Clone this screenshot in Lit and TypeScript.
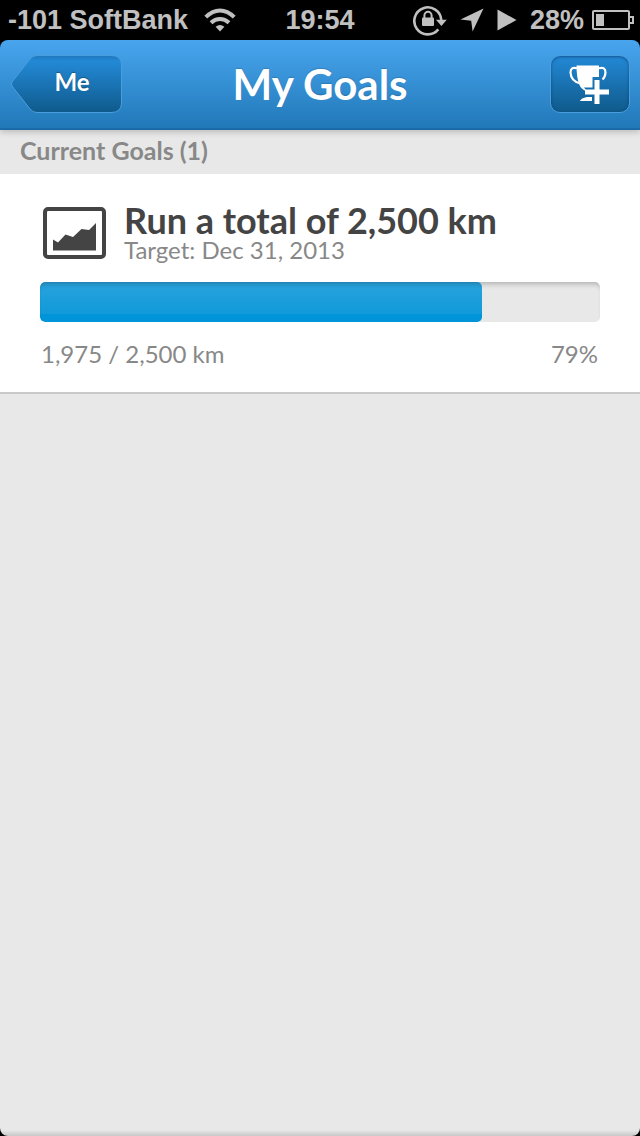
import { LitElement, html, css } from "lit";
import { customElement, property, state } from "lit/decorators.js";

interface Goal {
  title: string;
  target: string;
  done: number;
  total: number;
  unit: string;
}

@customElement("status-bar")
export class StatusBar extends LitElement {
  static styles = css`
    :host {
      display: grid;
      grid-template-columns: 1fr auto 1fr;
      align-items: center;
      height: 40px;
      padding: 0 6px;
      background: #000;
      color: #c0c0c0;
      font: 700 27px/40px "Liberation Sans", Arial, sans-serif;
      white-space: nowrap;
    }
    .side {
      display: flex;
      align-items: center;
      gap: 16px;
      padding-left: 2px;
    }
    .right {
      justify-content: flex-end;
      gap: 13px;
    }
    .power {
      display: flex;
      align-items: center;
      gap: 8px;
    }
    svg {
      display: block;
    }
  `;

  render() {
    return html`
      <div class="side">
        <span>-101 SoftBank</span>
        <svg width="32" height="24" viewBox="0 0 32 24" fill="none" stroke="#c0c0c0" stroke-width="4">
          <path d="M1.8 9.2 Q8.5 2.6 16 2.6 T30.2 9.2" />
          <path d="M7 14.8 Q11 11 16 11 T25 14.8" />
          <path d="M16 23.5 L11.6 18.8 Q16 15 20.4 18.8 Z" fill="#c0c0c0" stroke="none" />
        </svg>
      </div>
      <span>19:54</span>
      <div class="side right">
        <svg width="34" height="32" viewBox="0 0 34 32" fill="#c0c0c0">
          <path d="M25.3 25.4 A13.500 13.500 0 1 1 28.3 16" fill="none" stroke="#c0c0c0" stroke-width="2.6" />
          <path d="M23 15.8 H33.8 L28.4 22 Z" />
          <rect x="9" y="13.500" width="12" height="8.500" rx="1" />
          <path d="M11.4 14.5 V11.4 a3.6 3.6 0 0 1 7.2 0 V14.5" fill="none" stroke="#c0c0c0" stroke-width="2" />
        </svg>
        <svg width="24" height="24" viewBox="0 0 24 24" fill="#c0c0c0">
          <path d="M23.5 0.5 L12.6 23.5 L11.2 12.8 L0.5 11.6 Z" />
        </svg>
        <svg width="20" height="22" viewBox="0 0 20 22" fill="#c0c0c0">
          <path d="M0.5 0.5 L19.5 11 L0.5 21.5 Z" />
        </svg>
        <div class="power">
          <span>28%</span>
          <svg width="42" height="20" viewBox="0 0 42 20" fill="#c0c0c0">
            <rect x="1" y="1" width="36" height="18" rx="1" fill="none" stroke="#c0c0c0" stroke-width="2" />
            <rect x="4" y="4" width="8" height="12" />
            <path d="M38 7 H41 V13 H38" fill="none" stroke="#c0c0c0" stroke-width="2" />
          </svg>
        </div>
      </div>
    `;
  }
}

@customElement("nav-header")
export class NavHeader extends LitElement {
  static styles = css`
    :host {
      display: grid;
      grid-template-columns: 1fr auto 1fr;
      align-items: center;
      box-sizing: border-box;
      height: 90px;
      padding: 0 10px;
      border-radius: 8px 8px 0 0;
      background: linear-gradient(#48a5ee, #2179b8);
      border-bottom: 2px solid #1a69a8;
      box-shadow: 0 2px 6px rgba(0, 0, 0, 0.2);
      color: #fff;
      position: relative;
    }
    h1 {
      margin: 0;
      font: 700 42px/56px Lato, sans-serif;
      text-shadow: 0 -1px 1px rgba(0, 0, 0, 0.15);
    }
    button {
      display: grid;
      place-items: center;
      height: 58px;
      margin: 0;
      padding: 0;
      border: 0;
      background: none;
      color: #fff;
      font: 700 24px/32px Lato, sans-serif;
      text-shadow: 0 -1px 1px rgba(0, 0, 0, 0.3);
      cursor: pointer;
    }
    button > * {
      grid-area: 1 / 1;
    }
    .back {
      justify-self: start;
      width: 112px;
    }
    .back span {
      padding: 0 0 4px 12px;
    }
    .add {
      justify-self: end;
      box-sizing: border-box;
      width: 80px;
      border: 1px solid #4a9edb;
      border-radius: 10px;
      background: linear-gradient(#2389d6, #0f5a8b);
      box-shadow: inset 0 1px 3px rgba(0, 30, 80, 0.5);
    }
    svg {
      display: block;
    }
  `;

  @property() heading = "";
  @property() backLabel = "";

  render() {
    return html`
      <button class="back">
        <svg width="112" height="58" viewBox="0 0 112 58" aria-hidden="true">
          <defs>
            <linearGradient id="fill" x2="0" y2="1">
              <stop stop-color="#1d78bd" />
              <stop offset="0.1" stop-color="#2389d6" />
              <stop offset="1" stop-color="#0f5a8b" />
            </linearGradient>
          </defs>
          <path
            d="M27 0.500 H101 Q111.500 0.500 111.500 10 V48 Q111.500 57.500 101 57.500 H27 Q23 57.500 20 54 L2 31 Q1 29 2 27 L20 4 Q23 0.500 27 0.500 Z"
            fill="url(#fill)"
            stroke="#4a9edb"
          />
        </svg>
        <span>${this.backLabel}</span>
      </button>
      <h1>${this.heading}</h1>
      <button class="add" aria-label="Add goal">
        <svg width="42" height="40" viewBox="0 0 42 40" fill="#fff">
          <path d="M7.500 1.500 H30 V13 H23.500 V23.500 H15 L18 27.500 Q12 25 10.500 21 Q7.500 14 7.500 1.500 Z" />
          <path
            d="M8 4.200 Q1.500 2.500 1.500 8.500 Q2 17.500 11.500 19.500 M30 4.200 Q36.500 2.500 36.500 8.500 Q36.300 13 33.500 15.500"
            fill="none"
            stroke="#fff"
            stroke-width="2.200"
          />
          <path d="M18 33 H23 V37 H11 Q12 34 18 33 Z" />
          <path d="M25.500 16 H30.500 V25.500 H40 V30.500 H30.500 V40 H25.500 V30.500 H16 V25.500 H25.500 Z" />
        </svg>
      </button>
    `;
  }
}

@customElement("goal-card")
export class GoalCard extends LitElement {
  static styles = css`
    :host {
      display: block;
      padding: 28px 40px 22px;
      background: #fff;
      border-bottom: 2px solid #c9c9c9;
      color: #888;
      font: 400 24px/32px Lato, sans-serif;
    }
    .top {
      display: flex;
      gap: 18px;
      padding: 0 3px;
    }
    svg {
      display: block;
      flex: none;
      margin-top: 5px;
    }
    h3 {
      margin: 0;
      color: #444;
      font: 700 36px/36px Lato, sans-serif;
    }
    p {
      margin: 0;
      line-height: 24px;
    }
    .track {
      height: 40px;
      margin: 20px 0 16px;
      border-radius: 5px;
      overflow: hidden;
      background: #e8e8e8;
      display: grid;
    }
    .track > * {
      grid-area: 1 / 1;
    }
    .bar {
      border-radius: 5px;
      background: linear-gradient(#29a3dd, #119ad9 80%, #0095d9 80%);
    }
    .shade {
      border-radius: 5px;
      box-shadow: inset 0 5px 5px -3px rgba(0, 0, 0, 0.24);
    }
    .figures {
      display: flex;
      justify-content: space-between;
      padding: 0 2px 0 1px;
    }
  `;

  @property({ attribute: false }) goal!: Goal;

  render() {
    const { title, target, done, total, unit } = this.goal;
    const percent = Math.round((done / total) * 100);
    return html`
      <div class="top">
        <svg width="63" height="52" viewBox="0 0 63 52" fill="#444" aria-hidden="true">
          <rect x="2" y="2" width="59" height="48" rx="3" fill="none" stroke="#444" stroke-width="4" />
          <path d="M10 32.500 L15 35.500 L22.500 27.500 L30 30 L38.500 22 L46 23 L53 16 V43.500 H10 Z" />
        </svg>
        <div>
          <h3>${title}</h3>
          <p>Target: ${target}</p>
        </div>
      </div>
      <div
        class="track"
        role="progressbar"
        aria-label=${title}
        aria-valuemin="0"
        aria-valuemax="100"
        aria-valuenow=${percent}
      >
        <div class="bar" style="width: ${percent}%"></div>
        <div class="shade"></div>
      </div>
      <div class="figures">
        <span>${done.toLocaleString("en-US")} / ${total.toLocaleString("en-US")} ${unit}</span>
        <span>${percent}%</span>
      </div>
    `;
  }
}

@customElement("app-root")
export class AppRoot extends LitElement {
  static styles = css`
    :host {
      display: flex;
      flex-direction: column;
      min-height: 100vh;
      background: #000;
    }
    main {
      flex: 1;
      border-radius: 0 0 8px 8px;
      background: linear-gradient(transparent calc(100% - 6px), #c8c8c8), #e8e8e8;
    }
    h2 {
      margin: 0;
      padding: 0 20px 4px;
      color: #888;
      font: 700 25px/40px Lato, sans-serif;
    }
  `;

  @state() private goals: Goal[] = [
    { title: "Run a total of 2,500 km", target: "Dec 31, 2013", done: 1975, total: 2500, unit: "km" },
  ];

  render() {
    return html`
      <status-bar></status-bar>
      <nav-header heading="My Goals" backLabel="Me"></nav-header>
      <main>
        <h2>Current Goals (${this.goals.length})</h2>
        ${this.goals.map((goal) => html`<goal-card .goal=${goal}></goal-card>`)}
      </main>
    `;
  }
}
